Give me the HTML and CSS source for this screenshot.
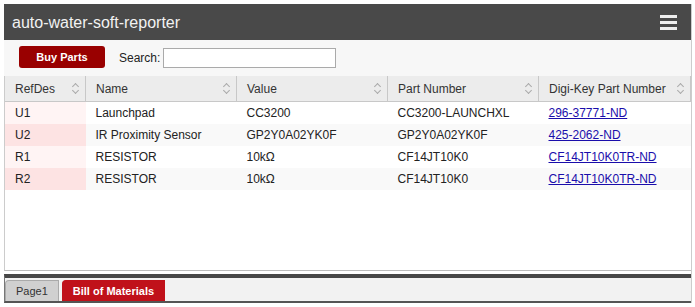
FILE: index.html
```html
<!DOCTYPE html>
<html lang="en">
<head>
  <meta charset="UTF-8">
  <title>auto-water-soft-reporter</title>
  <link rel="stylesheet" href="styles.css">
</head>
<body>
<div class="app">
  <div class="topbar">
    <span class="title">auto-water-soft-reporter</span>
    <span class="menu"><i></i><i></i><i></i></span>
  </div>
  <div class="toolbar">
    <button class="buy">Buy Parts</button>
    <label for="search">Search:</label>
    <input type="text" id="search">
  </div>
  <div class="tablewrap">
    <table class="bom">
      <thead>
        <tr>
          <th class="c1">RefDes<span class="sort"></span></th>
          <th class="c2">Name<span class="sort"></span></th>
          <th class="c3">Value<span class="sort"></span></th>
          <th class="c4">Part Number<span class="sort"></span></th>
          <th class="c5">Digi-Key Part Number<span class="sort"></span></th>
        </tr>
      </thead>
      <tbody>
        <tr><td class="ref">U1</td><td>Launchpad</td><td>CC3200</td><td>CC3200-LAUNCHXL</td><td><a href="#">296-37771-ND</a></td></tr>
        <tr><td class="ref">U2</td><td>IR Proximity Sensor</td><td>GP2Y0A02YK0F</td><td>GP2Y0A02YK0F</td><td><a href="#">425-2062-ND</a></td></tr>
        <tr><td class="ref">R1</td><td>RESISTOR</td><td>10kΩ</td><td>CF14JT10K0</td><td><a href="#">CF14JT10K0TR-ND</a></td></tr>
        <tr><td class="ref">R2</td><td>RESISTOR</td><td>10kΩ</td><td>CF14JT10K0</td><td><a href="#">CF14JT10K0TR-ND</a></td></tr>
      </tbody>
    </table>
  </div>
  <div class="tabs">
    <span class="tab">Page1</span>
    <span class="tab active">Bill of Materials</span>
  </div>
</div>
</body>
</html>
```
FILE: styles.css
```css
body {
  margin: 0;
  background: #fff;
  font-family: "Liberation Sans", Arial, sans-serif;
  font-size: 12px;
  color: #222;
}

.app {
  margin: 4px 3px 0 4px;
  width: 687px;
  border-right: 1px solid #ccc;
}

.topbar {
  height: 36px;
  background: #494949;
  display: flex;
  align-items: center;
  justify-content: space-between;
  padding: 1px 14px 0 8px;
  box-sizing: border-box;
}

.title {
  color: #f2f2f2;
  font-size: 16px;
}

.menu {
  display: flex;
  flex-direction: column;
  gap: 3px;
  width: 17px;
}

.menu i {
  display: block;
  height: 3px;
  background: #eee;
}

.toolbar {
  height: 36px;
  background: #f7f7f7;
  display: flex;
  align-items: center;
  padding-left: 15px;
}

.buy {
  width: 86px;
  height: 22px;
  margin-top: -3px;
  background: #990000;
  color: #fff;
  border: 0;
  border-radius: 3px;
  font-family: inherit;
  font-size: 11px;
  font-weight: bold;
}

.toolbar label {
  margin-left: 14px;
  margin-right: 3px;
  color: #222;
}

.toolbar input {
  width: 169px;
  height: 16px;
  padding: 1px;
  border: 1px solid #aaa;
  margin: 0;
}

.tablewrap {
  height: 194px;
  border-bottom: 1px solid #bbb;
  border-left: 1px solid #ccc;
}

.bom {
  border-collapse: collapse;
  width: 686px;
}

.bom th {
  height: 25px;
  background: #ececec;
  border: 1px solid #c8c8c8;
  border-top: 0;
  text-align: left;
  font-weight: normal;
  color: #333;
  padding: 0 0 0 10px;
  position: relative;
}

.bom th:first-child {
  border-left: 0;
}

.c1 { width: 70px; }
.c2 { width: 140px; }
.c3 { width: 140px; }
.c4 { width: 140px; }

.sort {
  position: absolute;
  right: 6px;
  top: 7px;
  width: 7px;
  height: 11px;
}

.sort::before,
.sort::after {
  content: "";
  position: absolute;
  left: 1px;
  width: 4px;
  height: 4px;
  border-left: 1px solid #aaa;
  border-top: 1px solid #aaa;
}

.sort::before {
  top: 1px;
  transform: rotate(45deg);
}

.sort::after {
  bottom: 1px;
  transform: rotate(225deg);
}

.bom td {
  height: 22px;
  padding: 0 0 0 10px;
  color: #222;
}

.bom tbody tr:nth-child(even) {
  background: #f9f9f9;
}

.bom td.ref {
  background: #fff4f4;
}

.bom tr:nth-child(even) td.ref {
  background: #fde3e3;
}

.bom a {
  color: #1a0dab;
}

.tabs {
  margin-top: 3px;
  height: 23px;
  background: #f2f2f2;
  border-top: 4px solid #474747;
  border-bottom: 2px solid #555;
  border-left: 1px solid #777;
  display: flex;
  align-items: flex-end;
  gap: 3px;
}

.tab {
  height: 20px;
  line-height: 20px;
  padding: 0 10px;
  background: #d0d0d0;
  border: 1px solid #aaa;
  border-bottom: 0;
  border-radius: 4px 0 0 0;
  color: #333;
  font-size: 11px;
}

.tab.active {
  background: #c0111a;
  border-color: #c0111a;
  color: #fff;
  font-weight: bold;
}
```
